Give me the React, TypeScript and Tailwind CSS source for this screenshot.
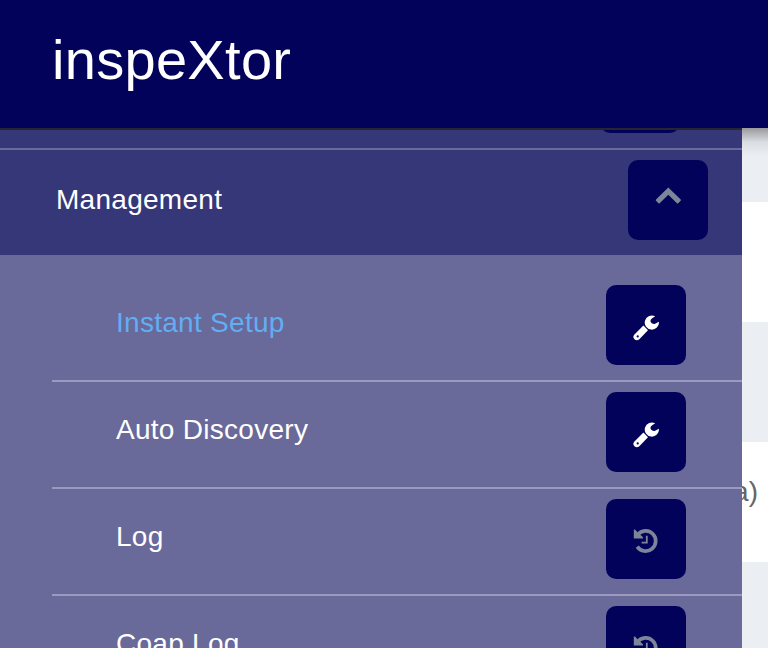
import React from "react";

const items = [
  { label: "Instant Setup", icon: "wrench", active: true },
  { label: "Auto Discovery", icon: "wrench", active: false },
  { label: "Log", icon: "history", active: false },
  { label: "Coap Log", icon: "history", active: false },
];

function Wrench() {
  return (
    <svg className="h-7 w-7" viewBox="0 0 28 28" fill="none">
      <path
        d="M23.2 3.3A7.1 7.1 0 1 0 26.9 8.8L22.6 10.9Q19.2 11.2 18.5 8.6Q18.2 6.2 20.2 5.2Z"
        fill="#fff"
      />
      <path
        d="M11.4 12.6L16 17.2L7.3 26.2Q5 28 2.7 26.5Q.2 24 2.2 21.7Z"
        fill="#fff"
      />
      <circle cx="5.7" cy="23.4" r="1.1" fill="#02025a" />
    </svg>
  );
}

function History() {
  return (
    <svg className="h-7 w-7" viewBox="0 0 28 28" fill="none">
      <path d="M5.7 7.7A10.1 10.1 0 1 1 5.2 19.6" stroke="#7d8599" strokeWidth="3.7" />
      <path d="M1.8 2.6Q3 2 4.3 3.9L11 10.2V11.6H1.8Z" fill="#7d8599" />
      <path d="M14.8 8.8V15.7H9.6" stroke="#7d8599" strokeWidth="1.8" />
    </svg>
  );
}

function IconButton({ children }: { children: React.ReactNode }) {
  return (
    <button className="flex h-20 w-20 shrink-0 items-center justify-center rounded-[10px] bg-[#02025a]">
      {children}
    </button>
  );
}

export default function App() {
  return (
    <div
      className="relative flex h-[648px] w-[768px] flex-col overflow-hidden bg-[#ebeff4] text-[28px] text-white"
      style={{ fontFamily: '"Liberation Sans", Arial, sans-serif' }}
    >
      <header className="h-32 shrink-0 bg-[#02025a] pt-7 pl-[52px]">
        <h1 className="text-[56px] leading-[64px] tracking-[0.3px]">inspeXtor</h1>
      </header>
      <div className="flex h-[520px]">
        <nav className="z-10 h-full w-[742px] shrink-0 overflow-hidden bg-[#363779] tracking-[0.28px]">
          <div className="h-[22px] border-t-2 border-b-2 border-t-[#262632] border-b-[#6a6a9b] pl-[600px]">
            <div className="h-[3px] w-20 overflow-hidden">
              <div className="-mt-[77px] h-20 rounded-[10px] bg-[#02025a]" />
            </div>
          </div>
          <div className="flex h-[105px] items-start justify-between pt-2.5 pr-[34px] pl-14">
            <span className="pt-6 leading-8">Management</span>
            <IconButton>
              <svg className="-mt-2 h-7 w-7" viewBox="0 0 28 28">
                <path
                  d="M14.3 5.5L26.7 17.6Q27.2 18.2 26.7 18.8L24.2 21.2Q23.5 21.8 22.9 21.2L14.3 12.7L5.7 21.2Q5.1 21.8 4.4 21.2L2 18.8Q1.4 18.2 2 17.6Z"
                  fill="#7d8599"
                />
              </svg>
            </IconButton>
          </div>
          <div className="bg-[#69699a] pt-5 pl-[52px]">
            {items.map((item) => (
              <div
                key={item.label}
                className="flex h-[107px] items-start justify-between border-b-2 border-[#9b99bd] pt-2.5 pr-14 pl-16"
              >
                <span className={item.active ? "pt-[22px] leading-8 text-[#62aef3]" : "pt-[22px] leading-8"}>
                  {item.label}
                </span>
                <IconButton>
                  <span className="pt-1">{item.icon === "wrench" ? <Wrench /> : <History />}</span>
                </IconButton>
              </div>
            ))}
          </div>
        </nav>
        <main className="min-w-0 flex-1 bg-[#ebeff4] text-[#666]">
          <div className="h-[74px] bg-linear-to-b from-[#99999d] via-[#dadde2] via-[14px] to-[#ebeff4] to-[28px]" />
          <div className="h-[120px] bg-white" />
          <div className="h-[120px]" />
          <div className="flex h-[120px] justify-end bg-white pt-[34px] pr-[10px] leading-8 whitespace-nowrap">
            (Coap Data)
          </div>
        </main>
      </div>
    </div>
  );
}
